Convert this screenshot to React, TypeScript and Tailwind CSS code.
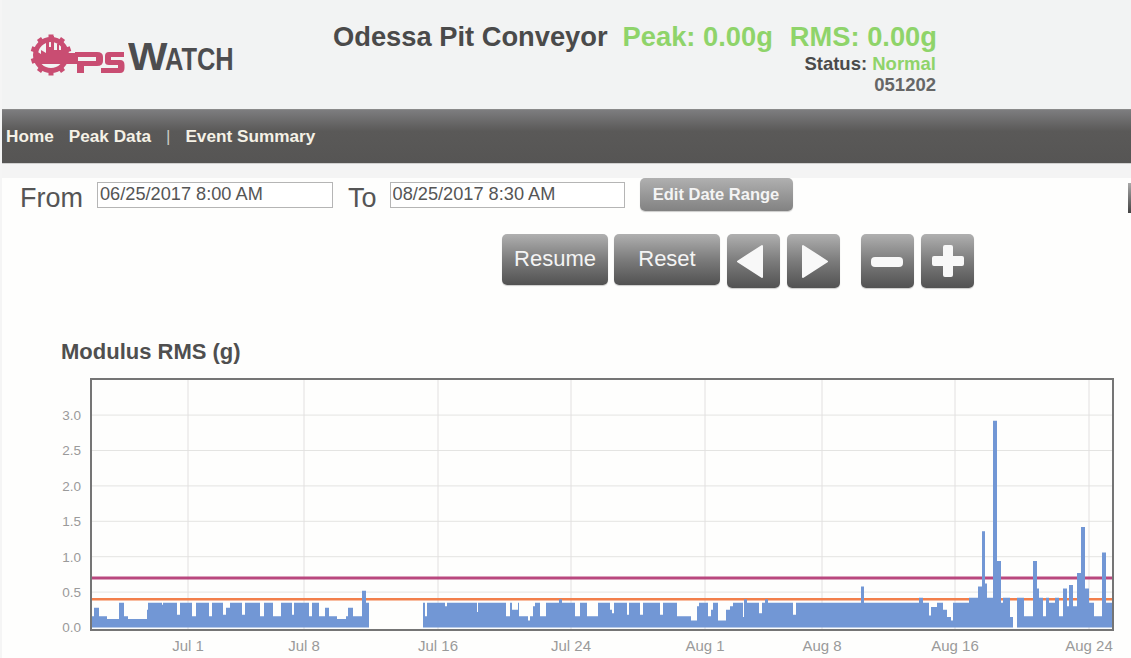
const F = '[font-family:"Liberation_Sans",Arial,sans-serif]';

// chart geometry: viewBox pixels of the plot box (page x 90-1114, y 378-631)
const PLOT_W = 1024;
const PLOT_H = 253;
const yFor = (v: number) => 249.5 - v * 70.8;

const yTicks = ["3.0", "2.5", "2.0", "1.5", "1.0", "0.5", "0.0"];
const yVals = [3, 2.5, 2, 1.5, 1, 0.5];
const xTicks = [
  { label: "Jul 1", x: 188 },
  { label: "Jul 8", x: 304 },
  { label: "Jul 16", x: 438 },
  { label: "Jul 24", x: 571 },
  { label: "Aug 1", x: 705 },
  { label: "Aug 8", x: 822 },
  { label: "Aug 16", x: 955 },
  { label: "Aug 24", x: 1089 },
];

// [page x, value]: value holds until the next x
const series: [number, number][] = [
  [92, 0.16], [94, 0.28], [99, 0.16], [107, 0.12], [119, 0.35], [124, 0.16], [128, 0.12],
  [147, 0.25], [148, 0.35], [162, 0.32], [163, 0.35], [177, 0.18], [180, 0.35], [192, 0.16], [196, 0.35],
  [209, 0.16], [212, 0.35], [223, 0.18], [226, 0.28], [230, 0.35], [242, 0.18], [245, 0.35],
  [260, 0.16], [264, 0.35], [273, 0.16], [281, 0.35], [292, 0.18], [294, 0.35], [309, 0.16], [312, 0.35],
  [319, 0.16], [325, 0.28], [329, 0.16], [337, 0.12], [346, 0.16], [348, 0.28], [353, 0.16],
  [362, 0.52], [366, 0.35], [369, 0],
  [423, 0.35], [425, 0.16], [427, 0.35], [445, 0.3], [447, 0.35], [477, 0.22], [478, 0.35],
  [506, 0.16], [510, 0.35], [512, 0.25], [518, 0.35], [519, 0.16], [528, 0.1], [530, 0.16], [533, 0.3], [535, 0.35],
  [540, 0.16], [546, 0.35], [559, 0.4], [562, 0.35], [575, 0.16], [580, 0.35],
  [587, 0.16], [598, 0.35], [610, 0.25], [612, 0.2], [614, 0.35], [627, 0.18], [629, 0.35],
  [640, 0.18], [643, 0.35], [660, 0.18], [663, 0.35], [677, 0.16], [691, 0.1], [697, 0.3], [699, 0.35],
  [708, 0.16], [711, 0.25], [713, 0.35], [718, 0.1], [726, 0.25], [730, 0.3], [733, 0.35],
  [743, 0.15], [744, 0.4], [747, 0.35], [759, 0.2], [762, 0.35], [765, 0.4], [768, 0.35],
  [793, 0.18], [796, 0.35],
  [861, 0.58], [864, 0.35], [919, 0.42], [923, 0.35], [929, 0.17], [931, 0.29], [937, 0.35],
  [943, 0.25], [947, 0.15], [951, 0.1], [953, 0.35], [969, 0.42], [978, 0.58], [982, 1.36],
  [985, 0.62], [987, 0.42], [993, 2.92], [997, 0.94], [1001, 0.35], [1003, 0.42],
  [1010, 0.15], [1013, 0], [1017, 0.42], [1024, 0.16], [1033, 0.94], [1037, 0.55],
  [1039, 0.42], [1043, 0.16], [1046, 0.42], [1049, 0.35], [1055, 0.42], [1059, 0.16], [1063, 0.55],
  [1067, 0.3], [1069, 0.6], [1073, 0.3], [1077, 0.77], [1081, 1.42], [1085, 0.55],
  [1089, 0.35], [1094, 0.16], [1102, 1.06], [1106, 0.35], [1114, 0.35],
];

const buildArea = () => {
  const base = yFor(0);
  let d = `M2 ${base}`;
  series.forEach(([px, v], i) => {
    const x = px - 90;
    if (i > 0) d += ` H${x}`;
    d += ` V${yFor(v).toFixed(1)}`;
  });
  return `${d} V${base} Z`;
};

const Logo = () => (
  <div className="flex items-start h-[46px] w-[206px]">
    {/* viewBox is in page coordinates, so the pieces line up with the reference */}
    <svg viewBox="30 32 98 46" className="w-[98px] h-[46px] shrink-0" aria-hidden="true">
      <g fill="#c94d72">
        <circle cx="51" cy="55" r="15.5" fill="none" stroke="#c94d72" strokeWidth="5" />
        {[0, 36, 72, 108, 144, 180, 216, 252, 288, 324].map((a) => (
          <rect key={a} x="48.5" y="34.5" width="5" height="5" transform={`rotate(${a} 51 55)`} />
        ))}
        {/* factory skyline and the band that runs into the P */}
        <path d="M36 64 V51 L41 54 V50 L46 53 V38 H49 V47 H51 V36 H54 V50 H57 V44 H59 V50 H61 V46 H63 V50 H66 V53 H78 V64 Z" />
        <path d="M75 52 H97 Q103 52 103 57 V61 Q103 66 97 66 H84 V73 H77 V61 H96 V57 H75 Z" />
        <path d="M109 52 H124 V57 H111 V60 H120 Q124.5 60 124.5 65 V68 Q124.5 73 120 73 H101 V68 H118 V65 H109 Q105 65 105 62 V56 Q105 52 109 52 Z" />
      </g>
    </svg>
    <span className="flex items-baseline mt-[10px] font-bold text-[#4d4d4f] whitespace-nowrap leading-[30px]">
      <span className="inline-block text-[38px] scale-x-[1.1] origin-left -mr-[1px]">W</span>
      <span className="inline-block text-[31px] scale-x-[0.82] origin-left ml-[2px]">ATCH</span>
    </span>
  </div>
);

const GlossButton = ({ children, className }: { children: React.ReactNode; className: string }) => (
  <button
    className={`flex items-center justify-center rounded-[5px] bg-gradient-to-b from-[#b0b0b0] via-[#7c7c7c] to-[#525252] text-[#f4f4f4] shadow-[0_1px_1px_rgba(0,0,0,0.2)] ${className}`}
  >
    {children}
  </button>
);

const Chart = () => (
  <div className="flex">
    <div className="relative w-[90px] h-[253px] shrink-0">
      {yTicks.map((t, i) => (
        <span
          key={t}
          className="absolute right-[9px] text-[13.5px] leading-[14px] text-[#9a9a9a]"
          style={{ top: 31 + i * 35.4 }}
        >
          {t}
        </span>
      ))}
    </div>
    <div className="w-[1024px] h-[253px] shrink-0 border-[2px] border-[#757575] bg-[#fefefd] overflow-hidden">
      <svg viewBox={`2 2 ${PLOT_W - 4} ${PLOT_H - 4}`} className="block w-full h-full" aria-hidden="true">
        {yVals.map((v) => (
          <line key={v} x1="0" x2={PLOT_W} y1={yFor(v)} y2={yFor(v)} stroke="#e4e4e2" strokeWidth="1" />
        ))}
        {xTicks.map((t) => (
          <line key={t.label} x1={t.x - 90} x2={t.x - 90} y1="0" y2={PLOT_H} stroke="#e2e0e0" strokeWidth="1" />
        ))}
        <line x1="0" x2={PLOT_W} y1={yFor(0.7)} y2={yFor(0.7)} stroke="#b9487f" strokeWidth="3" />
        <line x1="0" x2={PLOT_W} y1={yFor(0.4)} y2={yFor(0.4)} stroke="#f27f4b" strokeWidth="2.5" />
        <path d={buildArea()} fill="#7297d5" />
      </svg>
    </div>
  </div>
);

export default function App() {
  return (
    <div className={`${F} w-[1131px] h-[658px] overflow-hidden bg-[#f5f5f5] pl-[2px]`}>
      {/* header */}
      <header className="h-[109px] bg-[#f2f3f3] flex">
        <div className="pl-[28px] pt-[32px] w-[331px] shrink-0">
          <Logo />
        </div>
        <div className="pt-[21px] w-[603px] shrink-0 flex flex-col">
          <div className="flex items-baseline text-[27.3px] leading-[32px] font-bold whitespace-nowrap">
            <span className="text-[#4a4a4a]">Odessa Pit Conveyor</span>
            <span className="text-[#8fd46a] ml-[15px]">Peak: 0.00g</span>
            <span className="text-[#8fd46a] ml-[17px]">RMS: 0.00g</span>
          </div>
          <div className="text-right text-[18.5px] leading-[21px] font-bold whitespace-nowrap">
            <span className="text-[#4a4a4a]">Status: </span>
            <span className="text-[#8fd46a]">Normal</span>
          </div>
          <div className="text-right text-[18.5px] leading-[22px] font-bold text-[#666]">051202</div>
        </div>
      </header>

      {/* nav */}
      <nav className="h-[54px] bg-gradient-to-b from-[#7d7d7f] via-[#5a5958] via-40% to-[#565554] border-t border-[#8a8a8a] flex items-center pl-[4px] text-[17.2px] font-bold text-[#f5f1e6] whitespace-nowrap">
        <span>Home</span>
        <span className="ml-[15px]">Peak Data</span>
        <span className="ml-[15px] font-normal text-[#c9c9c4]">|</span>
        <span className="ml-[15px]">Event Summary</span>
      </nav>
      <div className="h-px bg-[#d0d0d0]" />

      <div className="bg-[#fefefd]">
        {/* date range */}
        <div className="h-[14px] bg-[#f4f4f4]" />
        <div className="flex items-start pl-[18px] pt-[4px] h-[56px] relative">
          <span className="text-[27px] leading-[32px] text-[#555]">From</span>
          <input
            readOnly
            value="06/25/2017 8:00 AM"
            className="ml-[14px] w-[236px] h-[26px] border border-[#b5b5b5] bg-white px-[2px] text-[18.2px] leading-[20px] text-[#555] outline-none pb-[2px]"
          />
          <span className="ml-[15px] text-[27px] leading-[32px] text-[#555]">To</span>
          <input
            readOnly
            value="08/25/2017 8:30 AM"
            className="ml-[13px] w-[235px] h-[26px] border border-[#b5b5b5] bg-white px-[2px] text-[18.2px] leading-[20px] text-[#555] outline-none pb-[2px]"
          />
          <button className="ml-[15px] w-[153px] h-[33px] -mt-[4px] rounded-[5px] bg-gradient-to-b from-[#b0b0b0] to-[#828282] text-[#f4f4f4] text-[16.5px] font-bold shadow-[0_1px_1px_rgba(0,0,0,0.2)]">
            Edit Date Range
          </button>
          <div className="absolute right-0 top-[5px] w-[3px] h-[30px] bg-gradient-to-b from-[#aaa] to-[#444]" />
        </div>

        {/* controls */}
        <div className="flex items-start pl-[500px] h-[106px]">
          <GlossButton className="w-[106px] h-[51px] text-[22px] pb-[2px]">Resume</GlossButton>
          <GlossButton className="ml-[6px] w-[106px] h-[51px] text-[22px] pb-[2px]">Reset</GlossButton>
          <GlossButton className="ml-[7px] w-[53px] h-[54px]">
            <svg viewBox="0 0 53 54" className="w-[53px] h-[54px]" aria-hidden="true">
              <path d="M11 27.5 L35 12 V43 Z" fill="#f8f8f8" stroke="#f8f8f8" strokeWidth="2" strokeLinejoin="round" />
            </svg>
          </GlossButton>
          <GlossButton className="ml-[7px] w-[53px] h-[54px]">
            <svg viewBox="0 0 53 54" className="w-[53px] h-[54px]" aria-hidden="true">
              <path d="M40 27.5 L16 12 V43 Z" fill="#f8f8f8" stroke="#f8f8f8" strokeWidth="2" strokeLinejoin="round" />
            </svg>
          </GlossButton>
          <GlossButton className="ml-[21px] w-[53px] h-[54px]">
            <svg viewBox="0 0 53 54" className="w-[53px] h-[54px]" aria-hidden="true">
              <rect x="10" y="23" width="32" height="10" rx="4" fill="#f8f8f8" />
            </svg>
          </GlossButton>
          <GlossButton className="ml-[7px] w-[53px] h-[54px]">
            <svg viewBox="0 0 53 54" className="w-[53px] h-[54px]" aria-hidden="true">
              <path d="M22 13 Q22 11 24 11 H30 Q32 11 32 13 V22 H41 Q43 22 43 24 V30 Q43 32 41 32 H32 V41 Q32 43 30 43 H24 Q22 43 22 41 V32 H13 Q11 32 11 30 V24 Q11 22 13 22 H22 Z" fill="#f8f8f8" />
            </svg>
          </GlossButton>
        </div>

        {/* chart */}
        <h2 className="pl-[59px] text-[22px] leading-[24px] font-bold text-[#4f4f4f]">Modulus RMS (g)</h2>
        <div className="mt-[14px] -ml-[2px]">
          <Chart />
          <div className="relative h-[27px] text-[15px] leading-[16px] text-[#9a9a9a]">
            {xTicks.map((t) => (
              <span key={t.label} className="absolute top-[7px] -translate-x-1/2 whitespace-nowrap" style={{ left: t.x }}>
                {t.label}
              </span>
            ))}
          </div>
        </div>
      </div>
    </div>
  );
}
